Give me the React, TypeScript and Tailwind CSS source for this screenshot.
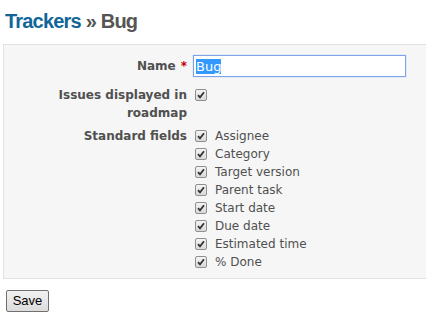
import React from "react";

const fields = [
  "Assignee",
  "Category",
  "Target version",
  "Parent task",
  "Start date",
  "Due date",
  "Estimated time",
  "% Done",
];

function Check() {
  return (
    <span className="inline-flex h-[12px] w-[12px] shrink-0 items-center justify-center rounded-[2px] border border-[#8f8f8f] bg-gradient-to-b from-[#f4f4f4] to-[#d9d9d9]">
      <svg width="8" height="8" viewBox="0 0 8 8">
        <path d="M1 4.2 L3 6.3 L7 1.3" fill="none" stroke="#333" strokeWidth="1.8" />
      </svg>
    </span>
  );
}

export default function App() {
  return (
    <div className="min-h-[322px] overflow-hidden bg-white pl-[3px] font-['DejaVu_Sans',sans-serif] text-[12px] text-[#505050]">
      <h2 className="ml-[2px] pt-[9px] font-['Liberation_Sans',sans-serif] text-[20px] leading-[24px] font-bold tracking-[-0.8px] text-[#555]">
        <span className="text-[#116699]">Trackers</span> » Bug
      </h2>

      <div className="mt-[11px] w-[440px] border border-[#e2e2e2] bg-[#f6f6f6] pt-[10px] pb-[7px]">
        <div className="grid grid-cols-[183px_1fr] gap-x-[6px]">
          <div className="flex h-[22px] items-center justify-end font-bold">
            Name <span className="ml-[5px] text-[#bb0000]">*</span>
          </div>
          <div className="h-[22px] w-[213px] border border-[#7ba3e6] bg-white px-[2px] py-[2px] shadow-[0_0_1px_#9ab8f0]">
            <span className="bg-[#3399ff] text-[13px] leading-[16px] text-white">Bug</span>
          </div>

          <div className="mt-[9px] text-right leading-[18px] font-bold">
            Issues displayed in
            <br />
            roadmap
          </div>
          <div className="mt-[9px] flex h-[18px] items-center pl-[2px]">
            <Check />
          </div>

          <div className="mt-[5px] text-right leading-[18px] font-bold">Standard fields</div>
          <div className="mt-[5px] flex flex-col">
            {fields.map((f) => (
              <label key={f} className="flex h-[18px] items-center gap-[8px] pl-[2px]">
                <Check />
                <span>{f}</span>
              </label>
            ))}
          </div>
        </div>
      </div>

      <button className="mt-[11px] ml-[3px] h-[22px] w-[43px] rounded-[2px] border border-[#707070] bg-gradient-to-b from-[#f2f2f2] to-[#dcdcdc] font-['Liberation_Sans',sans-serif] text-[13px] text-black">
        Save
      </button>
    </div>
  );
}
